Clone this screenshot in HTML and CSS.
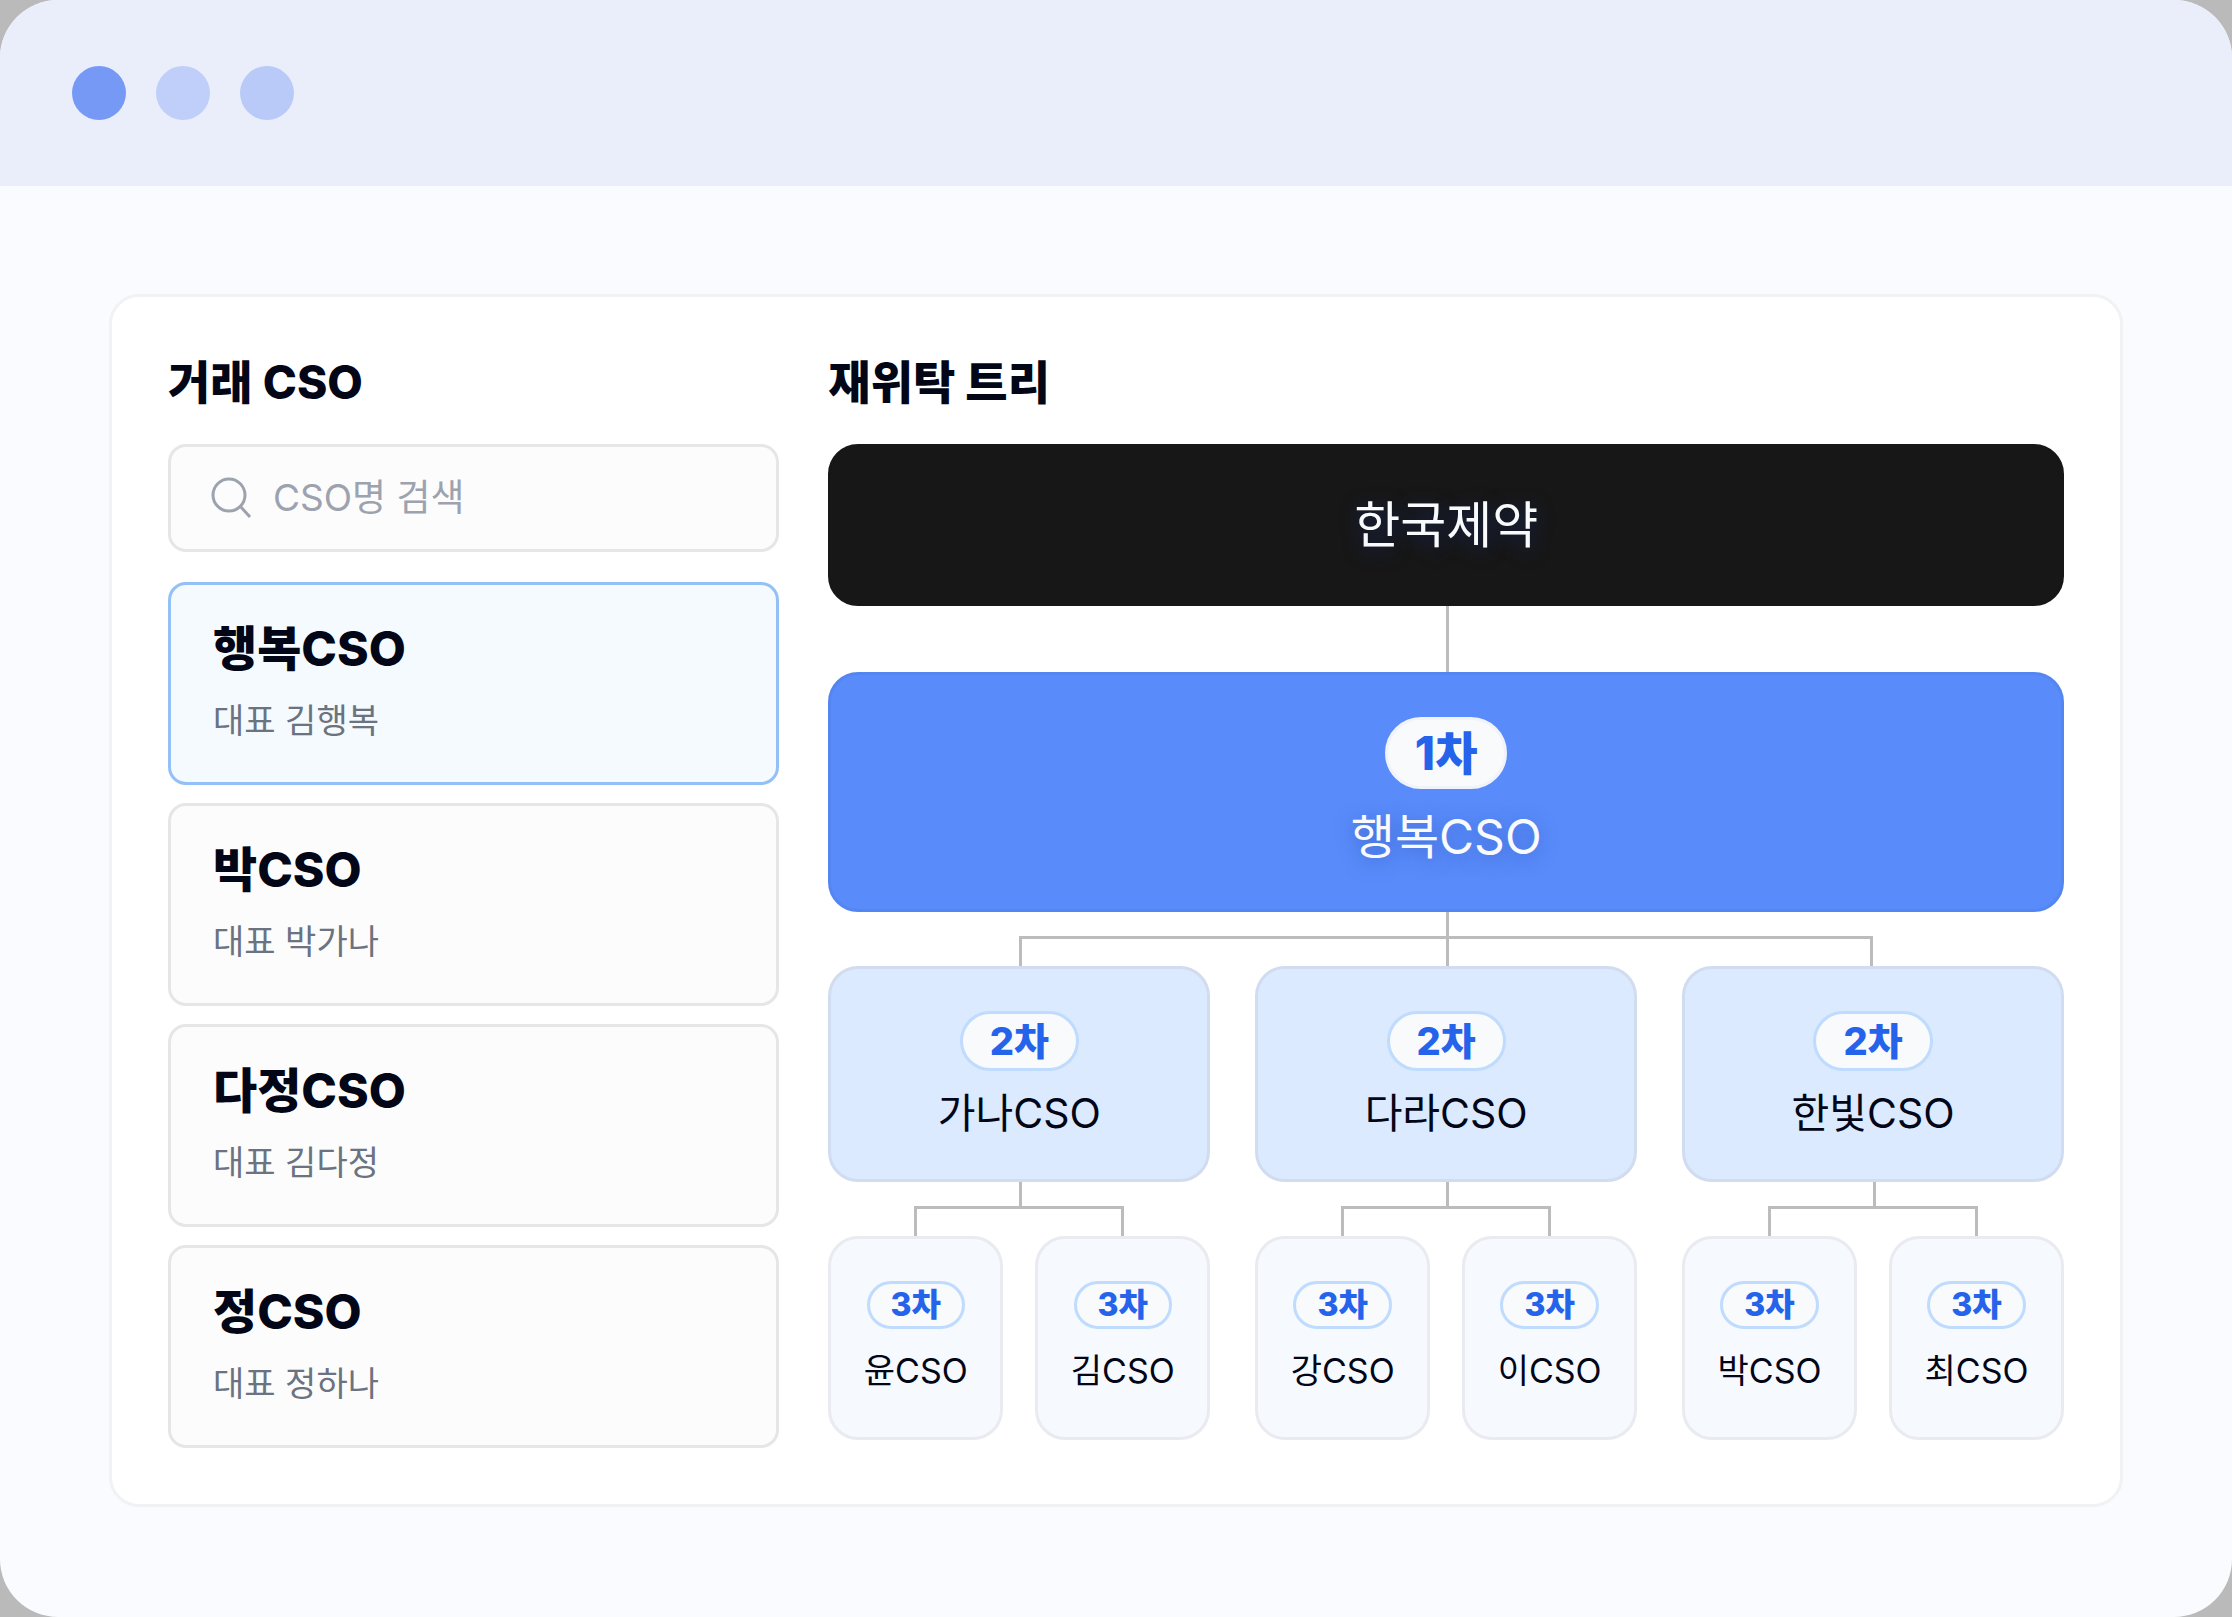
FILE: index.html
```
<!DOCTYPE html>
<html lang="ko">
<head>
  <meta charset="UTF-8">
  <meta name="viewport" content="width=device-width, initial-scale=1">
  <title>재위탁 트리</title>
  <link rel="stylesheet" href="styles.css">
</head>
<body>
  <div class="window">
    <header class="window-bar">
      <span class="dot dot-active"></span>
      <span class="dot"></span>
      <span class="dot dot-last"></span>
    </header>

    <main class="card">
      <section class="cso-panel">
        <h2><label for="csoSearch">거래 CSO</label></h2>
        <div class="search">
          <svg class="search-icon" viewBox="0 0 42 42" fill="none" xmlns="http://www.w3.org/2000/svg">
            <circle cx="18" cy="18" r="16" stroke="currentColor" stroke-width="3"/>
            <path d="M29 29L39 40" stroke="currentColor" stroke-width="3"/>
          </svg>
          <input type="text" id="csoSearch" placeholder="CSO명 검색">
        </div>

        <div class="cso-list">
          <button type="button" class="cso-item selected">
            <span class="cso-name">행복CSO</span>
            <span class="cso-owner">대표 김행복</span>
          </button>
          <button type="button" class="cso-item">
            <span class="cso-name">박CSO</span>
            <span class="cso-owner">대표 박가나</span>
          </button>
          <button type="button" class="cso-item">
            <span class="cso-name">다정CSO</span>
            <span class="cso-owner">대표 김다정</span>
          </button>
          <button type="button" class="cso-item">
            <span class="cso-name">정CSO</span>
            <span class="cso-owner">대표 정하나</span>
          </button>
        </div>
      </section>

      <section class="tree-panel">
        <h2>재위탁 트리</h2>

        <div class="node node-root">한국제약</div>
        <div class="link link-root"><span class="stem"></span></div>

        <div class="node node-first">
          <span class="badge">1차</span>
          <span class="node-name">행복CSO</span>
        </div>
        <div class="link link-first">
          <span class="stem"></span>
          <span class="branch"></span>
        </div>

        <div class="groups">
          <div class="group">
            <div class="node node-second">
              <span class="badge">2차</span>
              <span class="node-name">가나CSO</span>
            </div>
            <div class="link link-second">
              <span class="stem"></span>
              <span class="branch"></span>
            </div>
            <div class="pair">
              <div class="node node-third">
                <span class="badge">3차</span>
                <span class="node-name">윤CSO</span>
              </div>
              <div class="node node-third">
                <span class="badge">3차</span>
                <span class="node-name">김CSO</span>
              </div>
            </div>
          </div>

          <div class="group">
            <div class="node node-second">
              <span class="badge">2차</span>
              <span class="node-name">다라CSO</span>
            </div>
            <div class="link link-second">
              <span class="stem"></span>
              <span class="branch"></span>
            </div>
            <div class="pair">
              <div class="node node-third">
                <span class="badge">3차</span>
                <span class="node-name">강CSO</span>
              </div>
              <div class="node node-third">
                <span class="badge">3차</span>
                <span class="node-name">이CSO</span>
              </div>
            </div>
          </div>

          <div class="group">
            <div class="node node-second">
              <span class="badge">2차</span>
              <span class="node-name">한빛CSO</span>
            </div>
            <div class="link link-second">
              <span class="stem"></span>
              <span class="branch"></span>
            </div>
            <div class="pair">
              <div class="node node-third">
                <span class="badge">3차</span>
                <span class="node-name">박CSO</span>
              </div>
              <div class="node node-third">
                <span class="badge">3차</span>
                <span class="node-name">최CSO</span>
              </div>
            </div>
          </div>
        </div>
      </section>
    </main>
  </div>
</body>
</html>
```

FILE: styles.css
```
* {
  box-sizing: border-box;
}
body {
  margin: 0;
  background: #bababa;
  color: #020617;
  font-family: Inter, "Noto Sans CJK KR", sans-serif;
}
.window {
  min-height: 100vh;
  background: #f9fbff;
  border-radius: 58px;
  overflow: hidden;
}
.window-bar {
  display: flex;
  gap: 30px;
  padding: 66px 72px;
  background: #e9eefa;
}
.dot {
  width: 54px;
  height: 54px;
  border-radius: 50%;
  background: #bfcff9;
}
.dot-active {
  background: #7799f6;
}
.dot-last {
  background: #b9caf8;
}
.card {
  display: grid;
  grid-template-columns: 33.1fr 66.9fr;
  gap: 49px;
  margin: 108px 109px;
  padding: 56px;
  background: #fff;
  border: 3px solid #f1f2f4;
  border-radius: 30px;
}
.cso-panel,
.tree-panel {
  min-width: 0;
}
h2 {
  margin: 0 0 33px;
  font-size: 46px;
  font-weight: 800;
  line-height: 58px;
}

/* CSO list */
.search {
  display: flex;
  align-items: center;
  gap: 20px;
  height: 108px;
  padding: 0 40px;
  margin-bottom: 30px;
  background: #fcfcfc;
  border: 3px solid #e6e6e6;
  border-radius: 18px;
  color: #9ca3af;
}
.search-icon {
  flex: none;
  width: 42px;
  height: 42px;
}
.search input {
  width: 100%;
  min-width: 0;
  padding: 0;
  border: none;
  outline: none;
  background: none;
  color: #020617;
  font-family: inherit;
  font-size: 37px;
  line-height: 48px;
}
.search input::placeholder {
  color: #9ca3af;
}
.cso-list {
  display: flex;
  flex-direction: column;
  gap: 18px;
}
.cso-item {
  display: flex;
  flex-direction: column;
  gap: 20px;
  padding: 36px 42px 37px;
  background: #fcfcfc;
  border: 3px solid #e6e6e6;
  border-radius: 18px;
  color: #020617;
  font-family: inherit;
  text-align: left;
  cursor: pointer;
}
.cso-item.selected {
  background: #f5faff;
  border-color: #93c0f6;
}
.cso-name {
  font-size: 48px;
  font-weight: 800;
  line-height: 56px;
}
.cso-owner {
  color: #6b7280;
  font-size: 34px;
  line-height: 48px;
}

/* Tree nodes */
.node {
  display: flex;
  flex-direction: column;
  align-items: center;
  gap: 18px;
  padding: 42px 0;
  border: 3px solid;
  border-radius: 30px;
}
.badge {
  background: #f8fafc;
  border: 3px solid #bfdbfe;
  border-radius: 36px;
  color: #2563eb;
  font-weight: 800;
}
.node-root {
  background: #171717;
  border-color: #171717;
  color: #f8fafc;
  font-size: 50px;
  font-weight: 400;
  line-height: 72px;
  text-shadow: 0 4px 18px #172554;
}
.node-first {
  background: #598bfa;
  border-color: #5486f2;
  color: #f8fafc;
  font-size: 48px;
  line-height: 60px;
}
.node-first .node-name {
  text-shadow: 0 4px 18px #3b66cc;
}
.node-first .badge {
  padding: 0 27px;
  border-color: #f0f3f9;
  font-size: 46px;
  line-height: 66px;
}
.node-second {
  background: #dbeafe;
  border-color: #d1dcf0;
  font-size: 41px;
  line-height: 48px;
}
.node-second .badge {
  padding: 0 27px;
  font-size: 38px;
  line-height: 54px;
}
.node-third {
  background: #f6f9fe;
  border-color: #e9ebf0;
  font-size: 34px;
  line-height: 48px;
}
.node-third .badge {
  padding: 0 21px;
  font-size: 32px;
  line-height: 42px;
}

/* Connectors */
.link {
  display: grid;
  height: 54px;
}
.link-root {
  height: 66px;
}
.stem,
.branch {
  grid-area: 1 / 1;
}
.stem {
  width: 3px;
  margin-left: 50%;
  background: #bcbcbc;
}
.branch {
  align-self: end;
  height: 30px;
  border: 3px solid #bcbcbc;
  border-bottom: none;
}
.link-first .branch {
  margin: 0 calc((100% - 90px) / 6);
}
.link-second .stem {
  height: 24px;
}
.link-second .branch {
  width: 55%;
  margin: 0 auto;
}
.groups {
  display: grid;
  grid-template-columns: repeat(3, 1fr);
  gap: 45px;
}
.pair {
  display: grid;
  grid-template-columns: repeat(2, 1fr);
  gap: 32px;
}
```
